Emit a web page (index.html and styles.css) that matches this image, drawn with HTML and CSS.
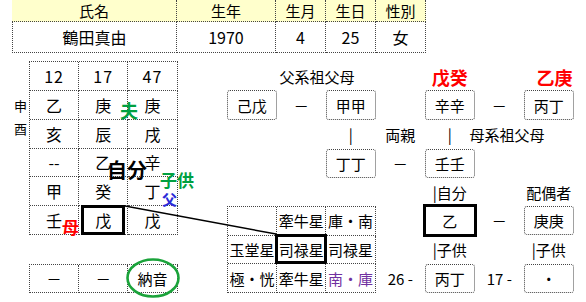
FILE: index.html
```html
<!DOCTYPE html>
<html lang="ja">
<head>
<meta charset="utf-8">
<title>命式</title>
<link rel="stylesheet" href="styles.css">
</head>
<body>
<div class="profile">
  <div class="ph">氏名</div>
  <div class="ph">生年</div>
  <div class="ph">生月</div>
  <div class="ph">生日</div>
  <div class="ph">性別</div>
  <div class="pd first">鶴田真由</div>
  <div class="pd">1970</div>
  <div class="pd">4</div>
  <div class="pd">25</div>
  <div class="pd">女</div>
</div>

<div class="board">
  <div class="side side1">申</div>
  <div class="side side2">酉</div>

  <div class="pillars">
    <div class="cell num">12</div><div class="cell num">17</div><div class="cell num">47</div>
    <div class="cell">乙</div><div class="cell">庚</div><div class="cell">庚</div>
    <div class="cell">亥</div><div class="cell">辰</div><div class="cell">戌</div>
    <div class="cell">--</div><div class="cell">乙</div><div class="cell">辛</div>
    <div class="cell">甲</div><div class="cell">癸</div><div class="cell">丁</div>
    <div class="cell">壬</div><div class="cell hl-self">戊</div><div class="cell">戊</div>
  </div>

  <div class="nayin">
    <div class="cell">－</div><div class="cell">－</div><div class="cell">納音</div>
  </div>

  <div class="stars">
    <div class="cell"></div><div class="cell">牽牛星</div><div class="cell">庫・南</div>
    <div class="cell">玉堂星</div><div class="cell hl-star">司禄星</div><div class="cell">司禄星</div>
    <div class="cell">極・恍</div><div class="cell">牽牛星</div><div class="cell purple">南・庫</div>
  </div>

  <div class="lbl c5 r0 start">父系祖父母</div>
  <div class="lbl red c8 r0 bottom">戊癸</div>
  <div class="lbl red c10 r0 bottom end">乙庚</div>

  <div class="box c4 r1">己戊</div>
  <div class="lbl c5 r1">－</div>
  <div class="box c6 r1">甲甲</div>
  <div class="box c8 r1">辛辛</div>
  <div class="lbl c9 r1">－</div>
  <div class="box c10 r1">丙丁</div>

  <div class="lbl c6 r2">|</div>
  <div class="lbl c7 r2">両親</div>
  <div class="lbl c8 r2">|</div>
  <div class="lbl c9 r2 start2">母系祖父母</div>

  <div class="box c6 r3">丁丁</div>
  <div class="lbl c7 r3">－</div>
  <div class="box c8 r3">壬壬</div>

  <div class="lbl c8 r4">|自分</div>
  <div class="lbl c10 r4">配偶者</div>

  <div class="box thick c8 r5">乙</div>
  <div class="lbl c9 r5">－</div>
  <div class="box c10 r5">庚庚</div>

  <div class="lbl c8 r6">|子供</div>
  <div class="lbl c10 r6">|子供</div>

  <div class="lbl c7 r7">26 -</div>
  <div class="box c8 r7">丙丁</div>
  <div class="lbl c9 r7">17 -</div>
  <div class="box c10 r7">・</div>

  <svg class="link" width="156" height="32" viewBox="0 0 156 32"><line x1="1" y1="1" x2="152" y2="29" stroke="#000" stroke-width="1.4"/></svg>
  <svg class="ring" width="56" height="42" viewBox="0 0 56 42"><ellipse cx="28" cy="21" rx="25.5" ry="18.5" fill="none" stroke="#1aa33a" stroke-width="2.6"/></svg>

  <div class="tag tag-husband">夫</div>
  <div class="tag tag-self">自分</div>
  <div class="tag tag-child">子供</div>
  <div class="tag tag-father">父</div>
  <div class="tag tag-mother">母</div>
</div>
</body>
</html>
```

FILE: styles.css
```css
* { box-sizing: border-box; }

html, body {
  margin: 0;
  padding: 0;
  background: #fff;
}

body {
  width: 586px;
  height: 302px;
  overflow: hidden;
  font-family: "Noto Sans CJK JP", "Noto Sans", sans-serif;
  color: #000;
}

/* ---------- profile table ---------- */
.profile {
  display: grid;
  grid-template-columns: 165px 99px 50px 50px 50px;
  grid-template-rows: 22px 31px;
  margin-left: 12px;
  width: 414px;
}

.ph, .pd {
  display: flex;
  align-items: center;
  justify-content: center;
  border-right: 1px dotted #444;
  border-bottom: 1px dotted #444;
  line-height: 1;
}

.ph {
  background: #ffffcc;
  font-size: 15px;
}

.pd {
  font-size: 16px;
}

.pd.first {
  border-left: 1px dotted #444;
}

/* ---------- board ---------- */
.board {
  position: relative;
  margin-top: 8px;
  display: grid;
  grid-template-columns: 29px repeat(11, 49.5px);
  grid-template-rows: 29px 30px 29px 29px 28px 29px 29px 29px;
  font-size: 15px;
  line-height: 1;
}

.side {
  grid-column: 1;
  font-size: 13px;
  justify-self: end;
  margin-right: 2px;
}
.side1 { grid-row: 2; align-self: center; }
.side2 { grid-row: 3; align-self: start; margin-top: 2px; }

.pillars, .stars, .nayin {
  display: grid;
  grid-template-columns: repeat(3, 1fr);
  border-top: 1px dotted #444;
  border-left: 1px dotted #444;
}

.pillars {
  grid-column: 2 / 5;
  grid-row: 1 / 7;
  grid-template-rows: repeat(6, 1fr);
  font-size: 16px;
}

.nayin {
  grid-column: 2 / 5;
  grid-row: 8 / 9;
}

.stars {
  grid-column: 6 / 9;
  grid-row: 6 / 9;
  grid-template-rows: repeat(3, 1fr);
}

.cell {
  display: flex;
  align-items: center;
  justify-content: center;
  border-right: 1px dotted #444;
  border-bottom: 1px dotted #444;
  white-space: nowrap;
  position: relative;
}

.num { letter-spacing: 1px; }

.purple { color: #7030a0; }

.hl-self::after,
.hl-star::after {
  content: "";
  position: absolute;
  border: 3px solid #000;
}
.hl-self::after { top: -1px; bottom: -1px; left: 2px; right: 2px; }
.hl-star::after { top: -2px; bottom: -1px; left: -2px; right: -2px; }

/* grid placement helpers */
.c4 { grid-column: 6; }
.c5 { grid-column: 7; }
.c6 { grid-column: 8; }
.c7 { grid-column: 9; }
.c8 { grid-column: 10; }
.c9 { grid-column: 11; }
.c10 { grid-column: 12; }

.r0 { grid-row: 1; }
.r1 { grid-row: 2; }
.r2 { grid-row: 3; }
.r3 { grid-row: 4; }
.r4 { grid-row: 5; }
.r5 { grid-row: 6; }
.r6 { grid-row: 7; }
.r7 { grid-row: 8; }

.box {
  display: flex;
  align-items: center;
  justify-content: center;
  border: 1px dotted #444;
  border-radius: 3px;
  white-space: nowrap;
}

.box.thick {
  border: 3px solid #000;
  border-radius: 0;
  margin: -2px;
}

.lbl {
  display: flex;
  align-items: center;
  justify-content: center;
  white-space: nowrap;
}

.lbl.start {
  justify-self: start;
  margin-left: 3px;
  align-self: end;
  margin-bottom: 6px;
}

.lbl.start2 {
  justify-self: start;
  margin-left: -5px;
}

.lbl.red {
  color: #ff0000;
  font-weight: bold;
  font-size: 18px;
}

.lbl.bottom {
  align-self: end;
  margin-bottom: 4px;
}

.lbl.end {
  justify-self: end;
  margin-right: 1px;
}

/* ---------- overlays ---------- */
.link {
  position: absolute;
  left: 124px;
  top: 144px;
}

.ring {
  position: absolute;
  left: 125px;
  top: 196px;
}

.tag {
  position: absolute;
  font-weight: bold;
  line-height: 1;
  white-space: nowrap;
}

.tag-husband { left: 120px; top: 40px; font-size: 18px; color: #00a040; }
.tag-self    { left: 107px; top: 99px; font-size: 20px; color: #000; }
.tag-child   { left: 160px; top: 110px; font-size: 17px; color: #00a040; }
.tag-father  { left: 162px; top: 130px; font-size: 15px; color: #2a2ad8; }
.tag-mother  { left: 62px; top: 157px; font-size: 17px; color: #ff0000; }
```
